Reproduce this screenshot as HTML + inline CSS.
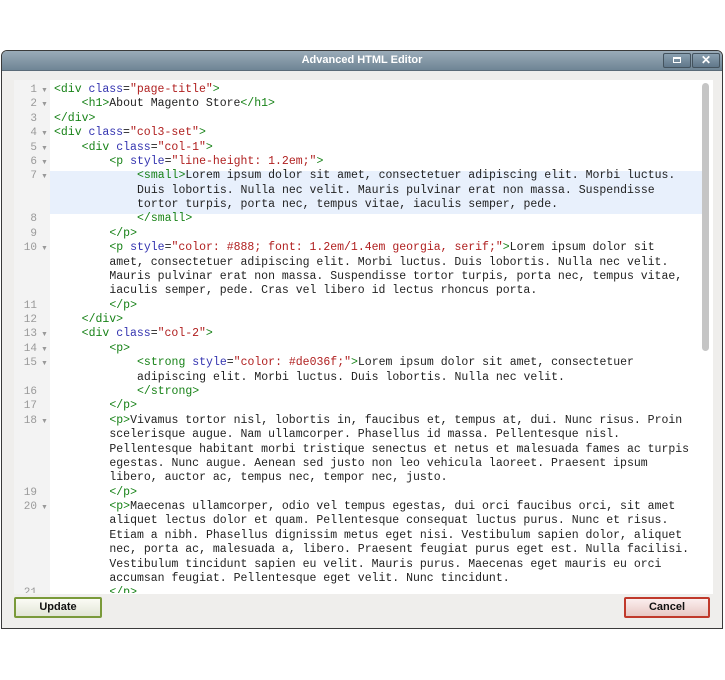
<!DOCTYPE html>
<html><head><meta charset="utf-8"><style>
body{margin:0;width:725px;height:680px;background:#fff;position:relative;overflow:hidden;font-family:"Liberation Sans",sans-serif}
.win{position:absolute;left:1px;top:50px;width:720px;height:577px;border:1px solid #3a3a3a;border-radius:6px 6px 0 0;background:#efeeec;overflow:hidden}
.title{height:19px;background:linear-gradient(#9aabb8,#6f8595);color:#fff;font-weight:bold;font-size:11px;text-align:center;line-height:19px;border-bottom:1px solid #5b6b78}
.tb{position:absolute;top:2px;width:26px;height:13px;border:1px solid #44535e;border-radius:2px;background:linear-gradient(#8aa0b0,#60778a)}
.ed{position:absolute;left:12px;top:29px;width:699px;height:514px;background:#fff;overflow:hidden}
.gut{position:absolute;left:0;top:0;width:36px;height:514px;background:#f3f3f3}
.hl{position:absolute;left:36px;top:91px;width:654px;height:43px;background:#e8f0fc}
.r{position:absolute;font-family:"Liberation Mono",monospace;font-size:11.5px;white-space:pre;color:#222;line-height:14px}
.n{position:absolute;font-family:"Liberation Mono",monospace;font-size:11px;color:#999;width:24px;text-align:right;left:0}
.a{position:absolute;left:28px;font-size:7px;color:#999}
.t{color:#178217}.at{color:#3434b0}.s{color:#b02020}
.sb{position:absolute;left:688px;top:3px;width:7px;height:268px;border-radius:4px;background:#c5c5c5}
.btn{position:absolute;top:546px;height:17px;border-radius:2px;font-weight:bold;font-size:11px;text-align:center;line-height:17px;color:#111}
</style></head><body>
<div class="win">
<div class="title">Advanced HTML Editor</div>
<div class="tb" style="left:661px"><div style="position:absolute;left:9px;top:3px;width:8px;height:6px;border:1px solid #fff;border-top-width:2px;box-sizing:border-box"></div></div>
<div class="tb" style="left:690px;color:#fff;font-size:12px;font-weight:bold;text-align:center;line-height:13px">✕</div>
<div class="ed">
<div class="gut"></div><div class="hl"></div><div class="sb"></div>
</div>
<div class="btn" style="left:12px;width:84px;border:2px solid #7a9a3a;background:linear-gradient(#fbfbf5,#e2e6d6)">Update</div>
<div class="btn" style="left:622px;width:82px;border:2px solid #c0392b;background:linear-gradient(#fbeeee,#e8c8c4)">Cancel</div>
</div>
<div style="position:absolute;left:13px;top:80px;width:699px;height:513px;overflow:hidden">
<script>
var T='<span class="t">',A='<span class="at">',S='<span class="s">',E='</span>';
function tag(s){return T+s.replace(/&/g,'&amp;').replace(/</g,'&lt;').replace(/>/g,'&gt;')+E}
var rows=[
[1,0,tag('<div ')+A+'class'+E+'='+S+'"page-title"'+E+tag('>')],
[2,4,tag('<h1>')+'About Magento Store'+tag('</h1>')],
[3,0,tag('</div>')],
[4,0,tag('<div ')+A+'class'+E+'='+S+'"col3-set"'+E+tag('>')],
[5,4,tag('<div ')+A+'class'+E+'='+S+'"col-1"'+E+tag('>')],
[6,8,tag('<p ')+A+'style'+E+'='+S+'"line-height: 1.2em;"'+E+tag('>')],
[7,12,tag('<small>')+'Lorem ipsum dolor sit amet, consectetuer adipiscing elit. Morbi luctus.'],
[0,12,'Duis lobortis. Nulla nec velit. Mauris pulvinar erat non massa. Suspendisse'],
[0,12,'tortor turpis, porta nec, tempus vitae, iaculis semper, pede.'],
[8,12,tag('</small>')],
[9,8,tag('</p>')],
[10,8,tag('<p ')+A+'style'+E+'='+S+'"color: #888; font: 1.2em/1.4em georgia, serif;"'+E+tag('>')+'Lorem ipsum dolor sit'],
[0,8,'amet, consectetuer adipiscing elit. Morbi luctus. Duis lobortis. Nulla nec velit.'],
[0,8,'Mauris pulvinar erat non massa. Suspendisse tortor turpis, porta nec, tempus vitae,'],
[0,8,'iaculis semper, pede. Cras vel libero id lectus rhoncus porta.'],
[11,8,tag('</p>')],
[12,4,tag('</div>')],
[13,4,tag('<div ')+A+'class'+E+'='+S+'"col-2"'+E+tag('>')],
[14,8,tag('<p>')],
[15,12,tag('<strong ')+A+'style'+E+'='+S+'"color: #de036f;"'+E+tag('>')+'Lorem ipsum dolor sit amet, consectetuer'],
[0,12,'adipiscing elit. Morbi luctus. Duis lobortis. Nulla nec velit.'],
[16,12,tag('</strong>')],
[17,8,tag('</p>')],
[18,8,tag('<p>')+'Vivamus tortor nisl, lobortis in, faucibus et, tempus at, dui. Nunc risus. Proin'],
[0,8,'scelerisque augue. Nam ullamcorper. Phasellus id massa. Pellentesque nisl.'],
[0,8,'Pellentesque habitant morbi tristique senectus et netus et malesuada fames ac turpis'],
[0,8,'egestas. Nunc augue. Aenean sed justo non leo vehicula laoreet. Praesent ipsum'],
[0,8,'libero, auctor ac, tempus nec, tempor nec, justo.'],
[19,8,tag('</p>')],
[20,8,tag('<p>')+'Maecenas ullamcorper, odio vel tempus egestas, dui orci faucibus orci, sit amet'],
[0,8,'aliquet lectus dolor et quam. Pellentesque consequat luctus purus. Nunc et risus.'],
[0,8,'Etiam a nibh. Phasellus dignissim metus eget nisi. Vestibulum sapien dolor, aliquet'],
[0,8,'nec, porta ac, malesuada a, libero. Praesent feugiat purus eget est. Nulla facilisi.'],
[0,8,'Vestibulum tincidunt sapien eu velit. Mauris purus. Maecenas eget mauris eu orci'],
[0,8,'accumsan feugiat. Pellentesque eget velit. Nunc tincidunt.'],
[21,8,tag('</p>')]];
var arrows={1:1,2:1,4:1,5:1,6:1,7:1,10:1,13:1,14:1,15:1,18:1,20:1};
var h='';
rows.forEach(function(r,i){var y=3+i*14.38;
if(r[0]){h+='<div class="n" style="top:'+(y+1)+'px">'+r[0]+'</div>';if(arrows[r[0]])h+='<div class="a" style="top:'+(y+4)+'px">▼</div>';}
h+='<div class="r" style="left:'+(41+r[1]*6.92)+'px;top:'+y+'px">'+r[2]+'</div>';});
document.write(h);
</script>
</div>
</body></html>
